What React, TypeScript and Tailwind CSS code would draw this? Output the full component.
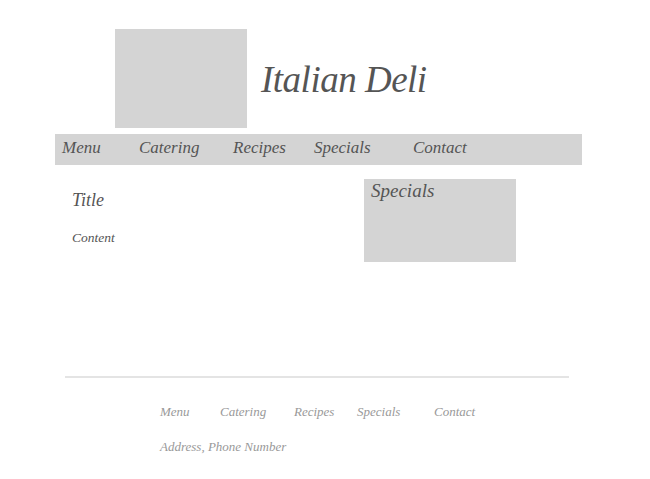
export default function App() {
  const font = { fontFamily: '"Liberation Serif", "DejaVu Serif", serif' };
  const nav = [
    { label: "Menu", w: "w-[77px]" },
    { label: "Catering", w: "w-[94px]" },
    { label: "Recipes", w: "w-[81px]" },
    { label: "Specials", w: "w-[99px]" },
    { label: "Contact", w: "w-auto" },
  ];
  const footer = [
    { label: "Menu", w: "w-[60px]" },
    { label: "Catering", w: "w-[74px]" },
    { label: "Recipes", w: "w-[63px]" },
    { label: "Specials", w: "w-[77px]" },
    { label: "Contact", w: "w-auto" },
  ];

  return (
    <div className="w-[650px] h-[479px] bg-white italic" style={font}>
      {/* header */}
      <div className="flex items-center pt-[29px] pl-[115px]">
        <div className="w-[132px] h-[99px] bg-[#d4d4d4]" />
        <h1 className="ml-[14px] mt-[2px] text-[37px] leading-none text-[#555] tracking-[-0.5px]">
          Italian Deli
        </h1>
      </div>

      {/* nav */}
      <div className="mt-[6px] ml-[55px] w-[527px] h-[31px] bg-[#d4d4d4] flex items-center pl-[7px] pb-[3px] text-[17px] text-[#555]">
        {nav.map((n) => (
          <span key={n.label} className={n.w}>
            {n.label}
          </span>
        ))}
      </div>

      {/* body */}
      <div className="flex mt-[14px] h-[197px]">
        <div className="pl-[72px] pt-[12px] w-[364px] text-[#555]">
          <p className="text-[18px] leading-none">Title</p>
          <p className="text-[13.5px] mt-[22px] leading-none">Content</p>
        </div>
        <div className="w-[152px] h-[83px] bg-[#d4d4d4] px-[7px] text-[19px] leading-tight text-[#555]">
          Specials
        </div>
      </div>

      {/* footer */}
      <div className="ml-[65px] w-[504px] border-t-2 border-[#e4e4e4]" />
      <div className="pl-[160px] pt-[24px] text-[13px] text-[#999]">
        <div className="flex">
          {footer.map((f) => (
            <span key={f.label} className={f.w}>
              {f.label}
            </span>
          ))}
        </div>
        <p className="mt-[15px]">Address, Phone Number</p>
      </div>
    </div>
  );
}
